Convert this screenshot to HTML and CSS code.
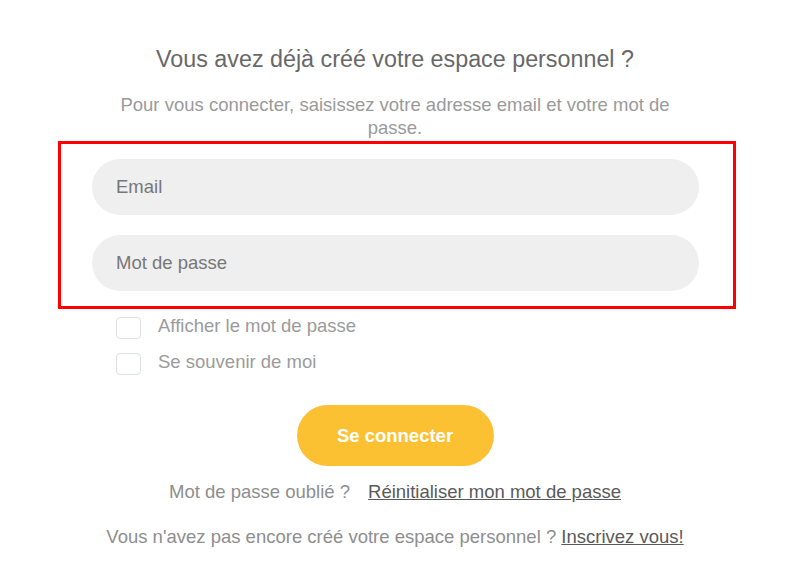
FILE: index.html
```html
<!DOCTYPE html>
<html lang="fr">
<head>
<meta charset="UTF-8">
<meta name="viewport" content="width=device-width, initial-scale=1.0">
<title>Connexion</title>
<link rel="stylesheet" href="styles.css">
</head>
<body>

<div class="login">
  <div class="intro">
    <h2 class="title">Vous avez déjà créé votre espace personnel ?</h2>
    <p class="subtitle">Pour vous connecter, saisissez votre adresse email et votre mot de passe.</p>
  </div>

  <div class="fields">
    <input class="field" type="email" placeholder="Email">
    <input class="field" type="password" placeholder="Mot de passe">
  </div>

  <div class="options">
    <label class="check">
      <span class="box"></span>
      <span class="check-label">Afficher le mot de passe</span>
    </label>
    <label class="check">
      <span class="box"></span>
      <span class="check-label">Se souvenir de moi</span>
    </label>
  </div>

  <div class="actions">
    <button class="submit">Se connecter</button>
    <p class="forgot">Mot de passe oublié ?<a href="#" class="link reset">Réinitialiser mon mot de passe</a></p>
    <p class="signup">Vous n'avez pas encore créé votre espace personnel ? <a href="#" class="link">Inscrivez vous!</a></p>
  </div>
</div>

</body>
</html>
```

FILE: styles.css
```css
body {
  margin: 0;
  background-color: #fff;
  font-family: "Liberation Sans", Arial, sans-serif;
  font-size: 18.5px;
  color: #999;
}
.login {
  width: 678px;
  margin-left: 58px;
}
.intro, .options, .actions {
  padding-right: 4px;
}
.intro {
  text-align: center;
}
.title {
  margin: 45px 0 0;
  font-size: 23.3px;
  font-weight: normal;
  line-height: 28px;
  color: #686868;
}
.subtitle {
  width: 590px;
  margin: 20px auto 0;
  line-height: 23px;
  color: #9a9a9a;
}
.fields {
  margin-top: 2px;
  padding: 15px 34px 15px 31px;
  border: 3px solid #f00;
  display: flex;
  flex-direction: column;
  gap: 20px;
}
.field {
  width: 607px;
  height: 56px;
  box-sizing: border-box;
  padding: 0 24px;
  border: none;
  border-radius: 28px;
  background-color: #efefef;
  font-family: inherit;
  font-size: 18.5px;
  color: #555;
  outline: none;
}
.field::placeholder {
  color: #777;
}
.options {
  margin-top: 8px;
  padding-left: 58px;
  display: flex;
  flex-direction: column;
  gap: 14px;
}
.check {
  display: flex;
  align-items: flex-start;
  gap: 17px;
  cursor: pointer;
}
.box {
  width: 23px;
  height: 20px;
  border: 1px solid #dde0e8;
  border-radius: 4px;
  background-color: #fff;
}
.check-label {
  margin-top: -2px;
  line-height: 22px;
  color: #9b9b9b;
}
.actions {
  display: flex;
  flex-direction: column;
  align-items: center;
}
.submit {
  margin-top: 30px;
  width: 197px;
  height: 61px;
  border: none;
  border-radius: 31px;
  background-color: #fcc133;
  color: #fff;
  font-family: inherit;
  font-size: 18.5px;
  font-weight: bold;
  cursor: pointer;
}
.forgot, .signup {
  margin: 0;
  line-height: 23px;
  color: #8e8e8e;
}
.forgot {
  margin-top: 14px;
}
.signup {
  margin-top: 22px;
}
.link {
  color: #5a5a5a;
  text-decoration: underline;
}
.reset {
  margin-left: 18px;
}
```
